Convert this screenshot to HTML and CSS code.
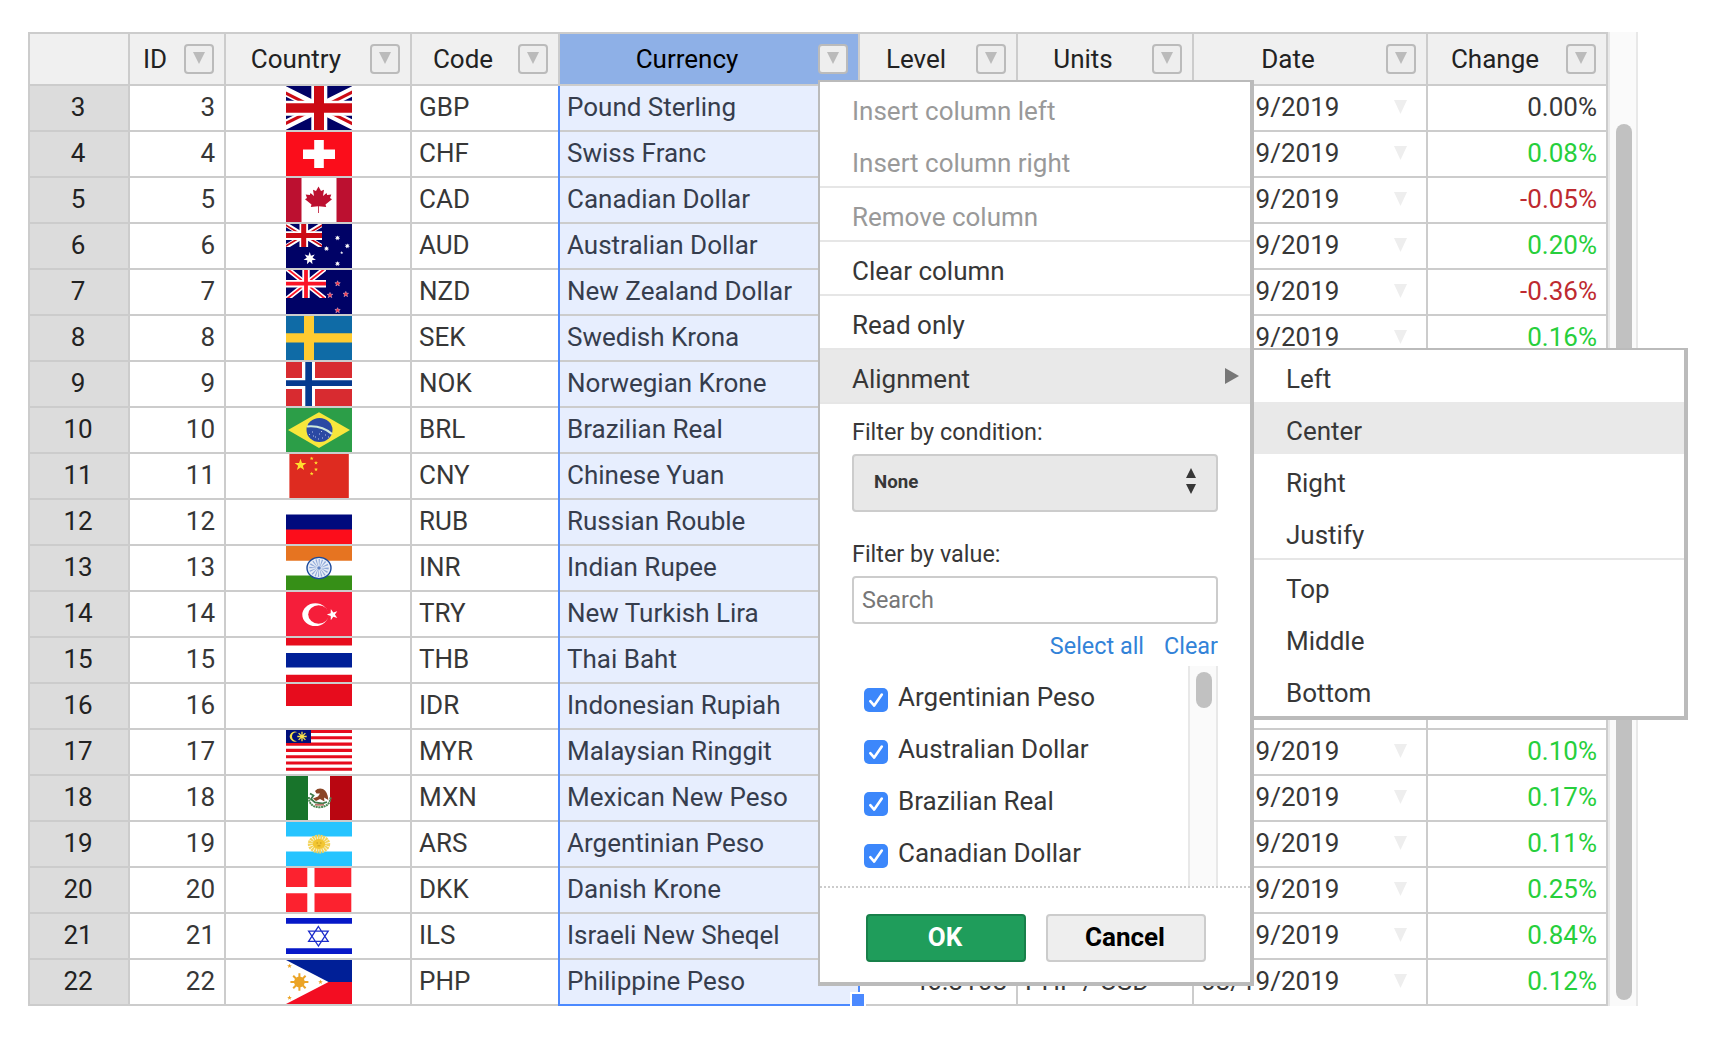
FILE: index.html
```html
<!DOCTYPE html>
<html lang="en">
<head>
<meta charset="utf-8">
<title>Currencies</title>
<link rel="stylesheet" href="styles.css">
</head>
<body>
<svg class="defs" width="0" height="0" aria-hidden="true">
  <symbol id="star5" viewBox="-10 -10 20 20"><polygon points="0,-10 2.4,-3.2 9.5,-3.1 3.8,1.2 5.9,8.1 0,4 -5.9,8.1 -3.8,1.2 -9.5,-3.1 -2.4,-3.2"/></symbol>
  <symbol id="star7" viewBox="-10 -10 20 20"><polygon points="0,-10 2,-4.2 7.8,-6.2 4.5,-1 9.7,2.2 3.7,2.9 4.3,9 0,4.7 -4.3,9 -3.7,2.9 -9.7,2.2 -4.5,-1 -7.8,-6.2 -2,-4.2"/></symbol>
  <symbol id="tick" viewBox="0 0 24 24"><path d="M6.3 13.2 10.2 17.6 17.8 6.6" fill="none" stroke="#fff" stroke-width="2.6" stroke-linecap="round" stroke-linejoin="round"/></symbol>
</svg>

<main class="sheet">
  <div class="grid">
    <div class="row head">
      <div class="corner"></div>
      <div><span>ID</span><button class="drop"></button></div>
      <div><span>Country</span><button class="drop"></button></div>
      <div><span>Code</span><button class="drop"></button></div>
      <div class="active"><span>Currency</span><button class="drop"></button></div>
      <div><span>Level</span><button class="drop"></button></div>
      <div><span>Units</span><button class="drop"></button></div>
      <div><span>Date</span><button class="drop"></button></div>
      <div><span>Change</span><button class="drop"></button></div>
    </div>
    <div class="row"><div class="num">3</div><div class="id">3</div><div class="flag"><svg viewBox="0 0 66 44"><rect width="66" height="44" fill="#000266"/><path d="M-3 4 69 40M-3 40 69 4" stroke="#fff" stroke-width="9.5"/><path d="M-3 5.8 33 23.8M33 21 69 39M-3 38.8 33 20.8M33 22.8 69 4.8" stroke="#cc0a14" stroke-width="3"/><path d="M33.3 0V44" stroke="#fff" stroke-width="16"/><path d="M0 22.2H66" stroke="#fff" stroke-width="15"/><path d="M33 0V44" stroke="#cc0a14" stroke-width="10"/><path d="M0 22H66" stroke="#cc0a14" stroke-width="9.3"/></svg></div><div>GBP</div><div class="cur">Pound Sterling</div><div class="lvl"></div><div></div><div class="date">08/19/2019</div><div class="chg">0.00%</div></div>
    <div class="row"><div class="num">4</div><div class="id">4</div><div class="flag"><svg viewBox="0 0 66 44"><rect width="66" height="44" fill="#fb0d1b"/><path d="M33 8V36M17 22.3H49" stroke="#fff" stroke-width="9.6"/></svg></div><div>CHF</div><div class="cur">Swiss Franc</div><div class="lvl"></div><div></div><div class="date">08/19/2019</div><div class="chg up">0.08%</div></div>
    <div class="row"><div class="num">5</div><div class="id">5</div><div class="flag"><svg viewBox="0 0 66 44"><rect width="66" height="44" fill="#fff"/><path d="M0 0H15.5V44H0zM50.5 0H66V44H50.5z" fill="#bc1030"/><path d="M32.5 8.5 35 13 38 11.7 37 18 40.5 15 41.2 17 45.3 16.5 44 20 46 21.3 39.5 26.5 40.2 29 32.9 28.2V35H32.1V28.2L24.8 29 25.5 26.5 19 21.3 21 20 19.7 16.5 23.8 17 24.5 15 28 18 27 11.7 30 13z" fill="#bc1030"/></svg></div><div>CAD</div><div class="cur">Canadian Dollar</div><div class="lvl"></div><div></div><div class="date">08/19/2019</div><div class="chg down">-0.05%</div></div>
    <div class="row"><div class="num">6</div><div class="id">6</div><div class="flag"><svg viewBox="0 0 66 44"><rect width="66" height="44" fill="#000266"/><svg width="36" height="23" viewBox="0 0 36 23"><path d="M-2 -.7 38 23.9M-2 23.9 38 -.7" stroke="#fff" stroke-width="4.6"/><path d="M-2 0 18 12.3M18 11 38 23.2M-2 23.2 18 11M18 12.3 38 0" stroke="#cc0a14" stroke-width="1.6"/><path d="M17.8 0V23M0 11.6H36" stroke="#fff" stroke-width="8.6"/><path d="M17.7 0V23M0 11.6H36" stroke="#cc0a14" stroke-width="5"/></svg><g fill="#fff"><use href="#star7" x="17.3" y="28" width="12.8" height="12.8"/><use href="#star7" x="48.7" y="11.2" width="5.6" height="5.6"/><use href="#star7" x="58.5" y="19.2" width="5.6" height="5.6"/><use href="#star7" x="37.7" y="21.8" width="5.6" height="5.6"/><use href="#star5" x="54" y="27" width="3.4" height="3.4"/><use href="#star7" x="48.7" y="37" width="5.6" height="5.6"/></g></svg></div><div>AUD</div><div class="cur">Australian Dollar</div><div class="lvl"></div><div></div><div class="date">08/19/2019</div><div class="chg up">0.20%</div></div>
    <div class="row"><div class="num">7</div><div class="id">7</div><div class="flag"><svg viewBox="0 0 66 44"><rect width="66" height="44" fill="#000266"/><svg width="40" height="28" viewBox="0 0 40 28"><path d="M-1 -3 41 30.4M-1 30.4 41 -3" stroke="#fff" stroke-width="5"/><path d="M-1 -3 41 30.4M-1 30.4 41 -3" stroke="#fb1426" stroke-width="1.8"/><path d="M20 0V28M0 13.7H40" stroke="#fff" stroke-width="7.4"/><path d="M20 0V28M0 13.7H40" stroke="#fb1426" stroke-width="3.8"/></svg><g fill="#fb3040" stroke="#e8b8cc" stroke-width="1.8"><use href="#star5" x="48.6" y="10.6" width="6" height="6"/><use href="#star5" x="56.8" y="21.2" width="6" height="6"/><use href="#star5" x="41" y="22.2" width="6" height="6"/><use href="#star5" x="48.6" y="37.4" width="6" height="6"/></g></svg></div><div>NZD</div><div class="cur">New Zealand Dollar</div><div class="lvl"></div><div></div><div class="date">08/19/2019</div><div class="chg down">-0.36%</div></div>
    <div class="row"><div class="num">8</div><div class="id">8</div><div class="flag"><svg viewBox="0 0 66 44"><rect width="66" height="44" fill="#0f6ba6"/><path d="M18 0H28V44H18zM0 17.3H66V26.5H0z" fill="#ffcb30"/></svg></div><div>SEK</div><div class="cur">Swedish Krona</div><div class="lvl"></div><div></div><div class="date">08/19/2019</div><div class="chg up">0.16%</div></div>
    <div class="row"><div class="num">9</div><div class="id">9</div><div class="flag"><svg viewBox="0 0 66 44"><rect width="66" height="44" fill="#d82b30"/><path d="M16 0H29V44H16zM0 16H66V27H0z" fill="#fff"/><path d="M19.3 0H26V44H19.3zM0 18.3H66V24H0z" fill="#063a8f"/></svg></div><div>NOK</div><div class="cur">Norwegian Krone</div><div class="lvl"></div><div></div><div class="date"></div><div class="chg"></div></div>
    <div class="row"><div class="num">10</div><div class="id">10</div><div class="flag"><svg viewBox="0 0 66 44"><rect width="66" height="44" fill="#2c9e48"/><path d="M2 22 33 4.3 64 22 33 40z" fill="#f8e63c"/><ellipse cx="33.5" cy="22" rx="13" ry="12" fill="#2b49a3"/><path d="M21 18.4Q36 17 46 26" fill="none" stroke="#cfe9dc" stroke-width="2"/><path d="M23 26.5h1M26 24h1M29 29h1M33 26h1M36 30h1M39 27h1M32 31h1M27 28h1M42 29h1M35 23.5h1" stroke="#b9c6ec" stroke-width="1"/></svg></div><div>BRL</div><div class="cur">Brazilian Real</div><div class="lvl"></div><div></div><div class="date"></div><div class="chg"></div></div>
    <div class="row"><div class="num">11</div><div class="id">11</div><div class="flag"><svg viewBox="0 0 66 44"><rect x="3.4" width="59.4" height="44" fill="#de2b20"/><g fill="#ffde2e"><use href="#star5" x="8.3" y="4.8" width="12.4" height="12.4"/><use href="#star5" x="23.6" y="2.4" width="4.2" height="4.2"/><use href="#star5" x="27.9" y="6.8" width="4.2" height="4.2"/><use href="#star5" x="27.9" y="13.4" width="4.2" height="4.2"/><use href="#star5" x="23.6" y="17.6" width="4.2" height="4.2"/></g></svg></div><div>CNY</div><div class="cur">Chinese Yuan</div><div class="lvl"></div><div></div><div class="date"></div><div class="chg"></div></div>
    <div class="row"><div class="num">12</div><div class="id">12</div><div class="flag"><svg viewBox="0 0 66 44"><path d="M0 14.6H66V30H0z" fill="#000a7d"/><path d="M0 29.6H66V44H0z" fill="#fc0d1b"/></svg></div><div>RUB</div><div class="cur">Russian Rouble</div><div class="lvl"></div><div></div><div class="date"></div><div class="chg"></div></div>
    <div class="row"><div class="num">13</div><div class="id">13</div><div class="flag"><svg viewBox="0 0 66 44"><path d="M0 0H66V14.7H0z" fill="#e67421"/><path d="M0 29.4H66V44H0z" fill="#368f17"/><ellipse cx="33" cy="22" rx="12" ry="10.6" fill="#e6ecf7" stroke="#1c4a9c" stroke-width="1.4"/><ellipse cx="33" cy="22" rx="6.2" ry="5.4" fill="none" stroke="#8fa8d8" stroke-width="7" stroke-dasharray=".9 1.3"/><circle cx="33" cy="22" r="1.8" fill="#5f82c4"/></svg></div><div>INR</div><div class="cur">Indian Rupee</div><div class="lvl"></div><div></div><div class="date"></div><div class="chg"></div></div>
    <div class="row"><div class="num">14</div><div class="id">14</div><div class="flag"><svg viewBox="0 0 66 44"><rect width="66" height="44" fill="#f51e3a"/><ellipse cx="29.3" cy="22.7" rx="13" ry="11.4" fill="#fff"/><ellipse cx="32.6" cy="22.5" rx="10.4" ry="9.2" fill="#f51e3a"/><g fill="#fff" transform="rotate(-18 46.6 22.6)"><use href="#star5" x="40.8" y="16.8" width="11.6" height="11.6"/></g></svg></div><div>TRY</div><div class="cur">New Turkish Lira</div><div class="lvl"></div><div></div><div class="date"></div><div class="chg"></div></div>
    <div class="row"><div class="num">15</div><div class="id">15</div><div class="flag"><svg viewBox="0 0 66 44"><path d="M0 0H66V7.6H0zM0 36.8H66V44H0z" fill="#e70c1d"/><path d="M0 15H66V29.6H0z" fill="#001f97"/></svg></div><div>THB</div><div class="cur">Thai Baht</div><div class="lvl"></div><div></div><div class="date"></div><div class="chg"></div></div>
    <div class="row"><div class="num">16</div><div class="id">16</div><div class="flag"><svg viewBox="0 0 66 44"><path d="M0 0H66V22H0z" fill="#e70c1d"/></svg></div><div>IDR</div><div class="cur">Indonesian Rupiah</div><div class="lvl"></div><div></div><div class="date"></div><div class="chg"></div></div>
    <div class="row"><div class="num">17</div><div class="id">17</div><div class="flag"><svg viewBox="0 0 66 44"><path d="M0 1.4H66M0 7.8H66M0 14.1H66M0 20.4H66M0 26.7H66M0 33H66M0 39.3H66" stroke="#e70c1d" stroke-width="3.1"/><path d="M0 0H25V13H0z" fill="#00107a"/><path d="M11.5 2.3A5 5 0 1 0 11.5 10.8 4.4 4.4 0 1 1 11.5 2.3z" fill="#f5e04a"/><path d="M16 1.8V11.2M11.3 6.5H20.7M12.6 3.1 19.4 9.9M19.4 3.1 12.6 9.9" stroke="#f5e04a" stroke-width="1.3"/></svg></div><div>MYR</div><div class="cur">Malaysian Ringgit</div><div class="lvl"></div><div></div><div class="date">08/19/2019</div><div class="chg up">0.10%</div></div>
    <div class="row"><div class="num">18</div><div class="id">18</div><div class="flag"><svg viewBox="0 0 66 44"><path d="M0 0H22V44H0z" fill="#18742b"/><path d="M44 0H66V44H44z" fill="#b90611"/><path d="M22.8 21Q23 31 33.5 31.2 44 31 44.6 21" fill="none" stroke="#4f8a55" stroke-width="2" stroke-dasharray="2 .6"/><path d="M29 15Q32 11.5 37 13 42 16 42.3 24L38 21.5 38.5 25.5 34 23 30 25 27 22.5 32 20.5 34 17.5 30.5 17.5z" fill="#8a4526"/><path d="M24 17.5 27.5 19.5 25 23 29 26.5 36 27.5 41 26" fill="none" stroke="#3e7a4a" stroke-width="1.8"/><path d="M29 28.8H38" stroke="#b9786a" stroke-width="1.8"/></svg></div><div>MXN</div><div class="cur">Mexican New Peso</div><div class="lvl"></div><div></div><div class="date">08/19/2019</div><div class="chg up">0.17%</div></div>
    <div class="row"><div class="num">19</div><div class="id">19</div><div class="flag"><svg viewBox="0 0 66 44"><path d="M0 0H66V14.4H0zM0 29.4H66V44H0z" fill="#26c4ff"/><ellipse cx="33" cy="22" rx="8.6" ry="6.8" fill="none" stroke="#f3d35a" stroke-width="5.2" stroke-dasharray="1.9 .6"/><ellipse cx="33" cy="22" rx="6.2" ry="5" fill="#f2c632"/><path d="M30.5 21H32M34 21H35.5M31.5 23.8H34.5" stroke="#b98b1a" stroke-width=".8"/></svg></div><div>ARS</div><div class="cur">Argentinian Peso</div><div class="lvl"></div><div></div><div class="date">08/19/2019</div><div class="chg up">0.11%</div></div>
    <div class="row"><div class="num">20</div><div class="id">20</div><div class="flag"><svg viewBox="0 0 66 44"><rect width="65.3" height="44" fill="#fc222f"/><path d="M21.3 0H28.5V44H21.3zM0 19H66V25.3H0z" fill="#fff"/></svg></div><div>DKK</div><div class="cur">Danish Krone</div><div class="lvl"></div><div></div><div class="date">08/19/2019</div><div class="chg up">0.25%</div></div>
    <div class="row"><div class="num">21</div><div class="id">21</div><div class="flag"><svg viewBox="0 0 66 44"><path d="M0 4H66V9.7H0zM0 34.2H66V40H0z" fill="#0618c8"/><path d="M32.4 12.5 42.2 27.4H22.6zM32.4 32 22.6 17.2H42.2z" fill="none" stroke="#1c2ccb" stroke-width="1.3"/></svg></div><div>ILS</div><div class="cur">Israeli New Sheqel</div><div class="lvl"></div><div></div><div class="date">08/19/2019</div><div class="chg up">0.84%</div></div>
    <div class="row"><div class="num">22</div><div class="id">22</div><div class="flag"><svg viewBox="0 0 66 44"><path d="M0 0H66V22H0z" fill="#001f97"/><path d="M0 22H66V44H0z" fill="#f30d22"/><path d="M0 0 42.5 22 0 44z" fill="#fff"/><g stroke="#eba427" stroke-width="2"><circle cx="13.4" cy="22" r="4.4" fill="#eba427"/><path d="M13.4 13.2V30.8M4.4 22H22.4M7.2 15.8 19.6 28.2M19.6 15.8 7.2 28.2"/></g><g fill="#eba427"><use href="#star5" x="1" y="3.6" width="5" height="5"/><use href="#star5" x="32" y="19.5" width="5" height="5"/><use href="#star5" x="1" y="35.3" width="5" height="5"/></g></svg></div><div>PHP</div><div class="cur">Philippine Peso</div><div class="lvl">46.3108</div><div>PHP / USD</div><div class="date">08/19/2019</div><div class="chg up">0.12%</div></div>
    <div class="selection"><i class="handle"></i></div>
  </div>
  <div class="track"><i class="thumb"></i></div>

  <div class="menu main-menu">
    <div class="item off">Insert column left</div>
    <div class="item off">Insert column right</div>
    <hr>
    <div class="item off">Remove column</div>
    <hr>
    <div class="item">Clear column</div>
    <hr>
    <div class="item">Read only</div>
    <hr>
    <div class="item hover">Alignment<svg class="arrow" viewBox="0 0 14 16"><path d="M0 0 14 8 0 16z" fill="#777"/></svg></div>
    <hr>
    <div class="filters">
      <div class="label">Filter by condition:</div>
      <div class="select"><span>None</span><svg viewBox="0 0 10 26"><path d="M0 10 5 0 10 10zM0 16H10L5 26z" fill="#373737"/></svg></div>
      <div class="label second">Filter by value:</div>
      <div class="search">Search</div>
      <div class="links"><a>Select all</a><a>Clear</a></div>
      <div class="values">
        <ul>
          <li><svg class="box"><use href="#tick"/></svg><span>Argentinian Peso</span></li>
          <li><svg class="box"><use href="#tick"/></svg><span>Australian Dollar</span></li>
          <li><svg class="box"><use href="#tick"/></svg><span>Brazilian Real</span></li>
          <li><svg class="box"><use href="#tick"/></svg><span>Canadian Dollar</span></li>
        </ul>
        <div class="mini-track"><i></i></div>
      </div>
    </div>
    <div class="actions"><button class="ok">OK</button><button class="cancel">Cancel</button></div>
  </div>

  <div class="menu sub-menu">
    <div class="item">Left</div>
    <div class="item hover">Center</div>
    <div class="item">Right</div>
    <div class="item">Justify</div>
    <hr>
    <div class="item">Top</div>
    <div class="item">Middle</div>
    <div class="item">Bottom</div>
  </div>
</main>
</body>
</html>
```
FILE: styles.css
```css
* { box-sizing: border-box; }
body {
  margin: 0;
  padding: 32px 0 0 28px;
  background: #fff;
  color: #373737;
  font: 26px/42px Roboto, sans-serif;
}
.defs { position: absolute; }
.sheet { display: flex; position: relative; width: 1610px; }

/* Data grid */
.grid {
  position: relative;
  width: 1580px;
  border: solid #ccc;
  border-width: 2px 0 0 2px;
}
.row {
  display: grid;
  grid-template-columns: 100px 96px 186px 148px 300px 158px 176px 234px 180px;
  height: 46px;
}
.row > div {
  border: solid #ccc;
  border-width: 0 2px 2px 0;
  padding: 0 9px 0 7px;
  white-space: nowrap;
  overflow: hidden;
}
.head { height: 52px; }
.row.head > div {
  display: flex;
  align-items: center;
  gap: 4px;
  padding: 0 10px 0 0;
  background: #f0f0f0;
  color: #222;
}
.head span { flex: 1; text-align: center; }
.row.head > .active { background: #8eb0e7; color: #000; }
.drop {
  display: flex;
  justify-content: center;
  width: 30px;
  height: 30px;
  padding: 6px 0 0;
  border: 2px solid #bbb;
  border-radius: 4px;
  background: #eee;
}
.drop::before {
  content: "";
  width: 12px;
  height: 12px;
  background: #bbb;
  clip-path: polygon(0 0, 100% 0, 50% 100%);
}
.row > .num { background: #dcdcdc; color: #222; text-align: center; padding: 0 2px 0 0; }
.row > .id, .row > .chg, .row > .lvl { text-align: right; }
.row > .flag { display: flex; justify-content: center; padding: 0; }
.flag > svg { width: 66px; height: 44px; margin-left: 2px; }
.row > .cur { background: #e7eefe; color: #363d4d; }
.row > .date { display: flex; justify-content: space-between; padding-right: 19px; }
.date::after {
  content: "";
  width: 13px;
  height: 14px;
  margin-top: 14px;
  background: #eee;
  clip-path: polygon(0 0, 100% 0, 50% 100%);
}
.up { color: #27cf3c; }
.down { color: #be2a30; }

.selection {
  position: absolute;
  left: 528px;
  top: 52px;
  width: 302px;
  height: 920px;
  border: solid #4b89ff;
  border-width: 0 2px 2px;
}
.handle {
  position: absolute;
  right: -8px;
  bottom: -2px;
  width: 16px;
  height: 14px;
  border: solid #fff;
  border-width: 2px 2px 0;
  background: #4b89ff;
}
.track {
  width: 30px;
  height: 974px;
  border: solid #e8e8e8;
  border-width: 0 2px;
  background: #fafafa;
  padding: 92px 0 0 6px;
}
.thumb { display: block; width: 16px; height: 876px; border-radius: 8px; background: #c1c1c1; }

/* Context menus */
.menu {
  position: absolute;
  border: solid #bbb;
  border-width: 2px 4px 4px 2px;
  background: #fff;
}
.main-menu { left: 790px; top: 48px; width: 436px; height: 906px; }
.sub-menu { left: 1224px; top: 316px; width: 436px; }
.menu hr { height: 2px; margin: 0; border: 0; background: #e6e6e6; }
.item {
  display: flex;
  justify-content: space-between;
  height: 52px;
  padding: 8px 11px 2px 32px;
}
.off { color: #999; }
.hover { background: #e9e9e9; }
.arrow { width: 14px; height: 16px; margin-top: 10px; }

.filters { padding: 0 32px; font-size: 23.4px; }
.label { height: 50px; padding-top: 7px; }
.select {
  display: flex;
  justify-content: space-between;
  align-items: flex-start;
  height: 58px;
  padding: 5px 20px 0;
  border: 2px solid #ccc;
  border-radius: 4px;
  background: #e8e8e8;
  font-size: 18.72px;
  font-weight: 700;
}
.select svg { width: 10px; height: 26px; margin-top: 7px; }
.label.second { height: 64px; padding-top: 21px; }
.search {
  height: 48px;
  padding: 1px 8px 0;
  border: 2px solid #ccc;
  border-radius: 4px;
  color: #777;
}
.links {
  display: flex;
  justify-content: flex-end;
  gap: 20px;
  height: 42px;
  padding-top: 1px;
  color: #3283d8;
}
.values {
  display: flex;
  justify-content: space-between;
  height: 220px;
  font-size: 26px;
}
.values ul { list-style: none; margin: 0; padding: 10px 0 0 12px; }
.values li { display: flex; gap: 10px; height: 52px; }
.box { width: 24px; height: 24px; margin-top: 12px; border-radius: 5px; background: #3c87fb; }
.mini-track {
  width: 30px;
  border: solid #e8e8e8;
  border-width: 0 2px;
  background: #fafafa;
  padding: 6px 0 0 6px;
}
.mini-track i { display: block; width: 16px; height: 36px; border-radius: 8px; background: #c1c1c1; }
.actions {
  display: flex;
  justify-content: center;
  gap: 20px;
  border-top: 2px dotted #ccc;
  padding: 26px 0 0 2px;
}
.actions button {
  width: 160px;
  height: 48px;
  padding: 0 2px 2px 0;
  border: 2px solid #ccc;
  border-radius: 4px;
  background: #eee;
  color: #000;
  font: 700 26px/42px Roboto, sans-serif;
}
.actions .ok { background: #1f9d5b; border-color: #18804a; color: #fff; }
```
